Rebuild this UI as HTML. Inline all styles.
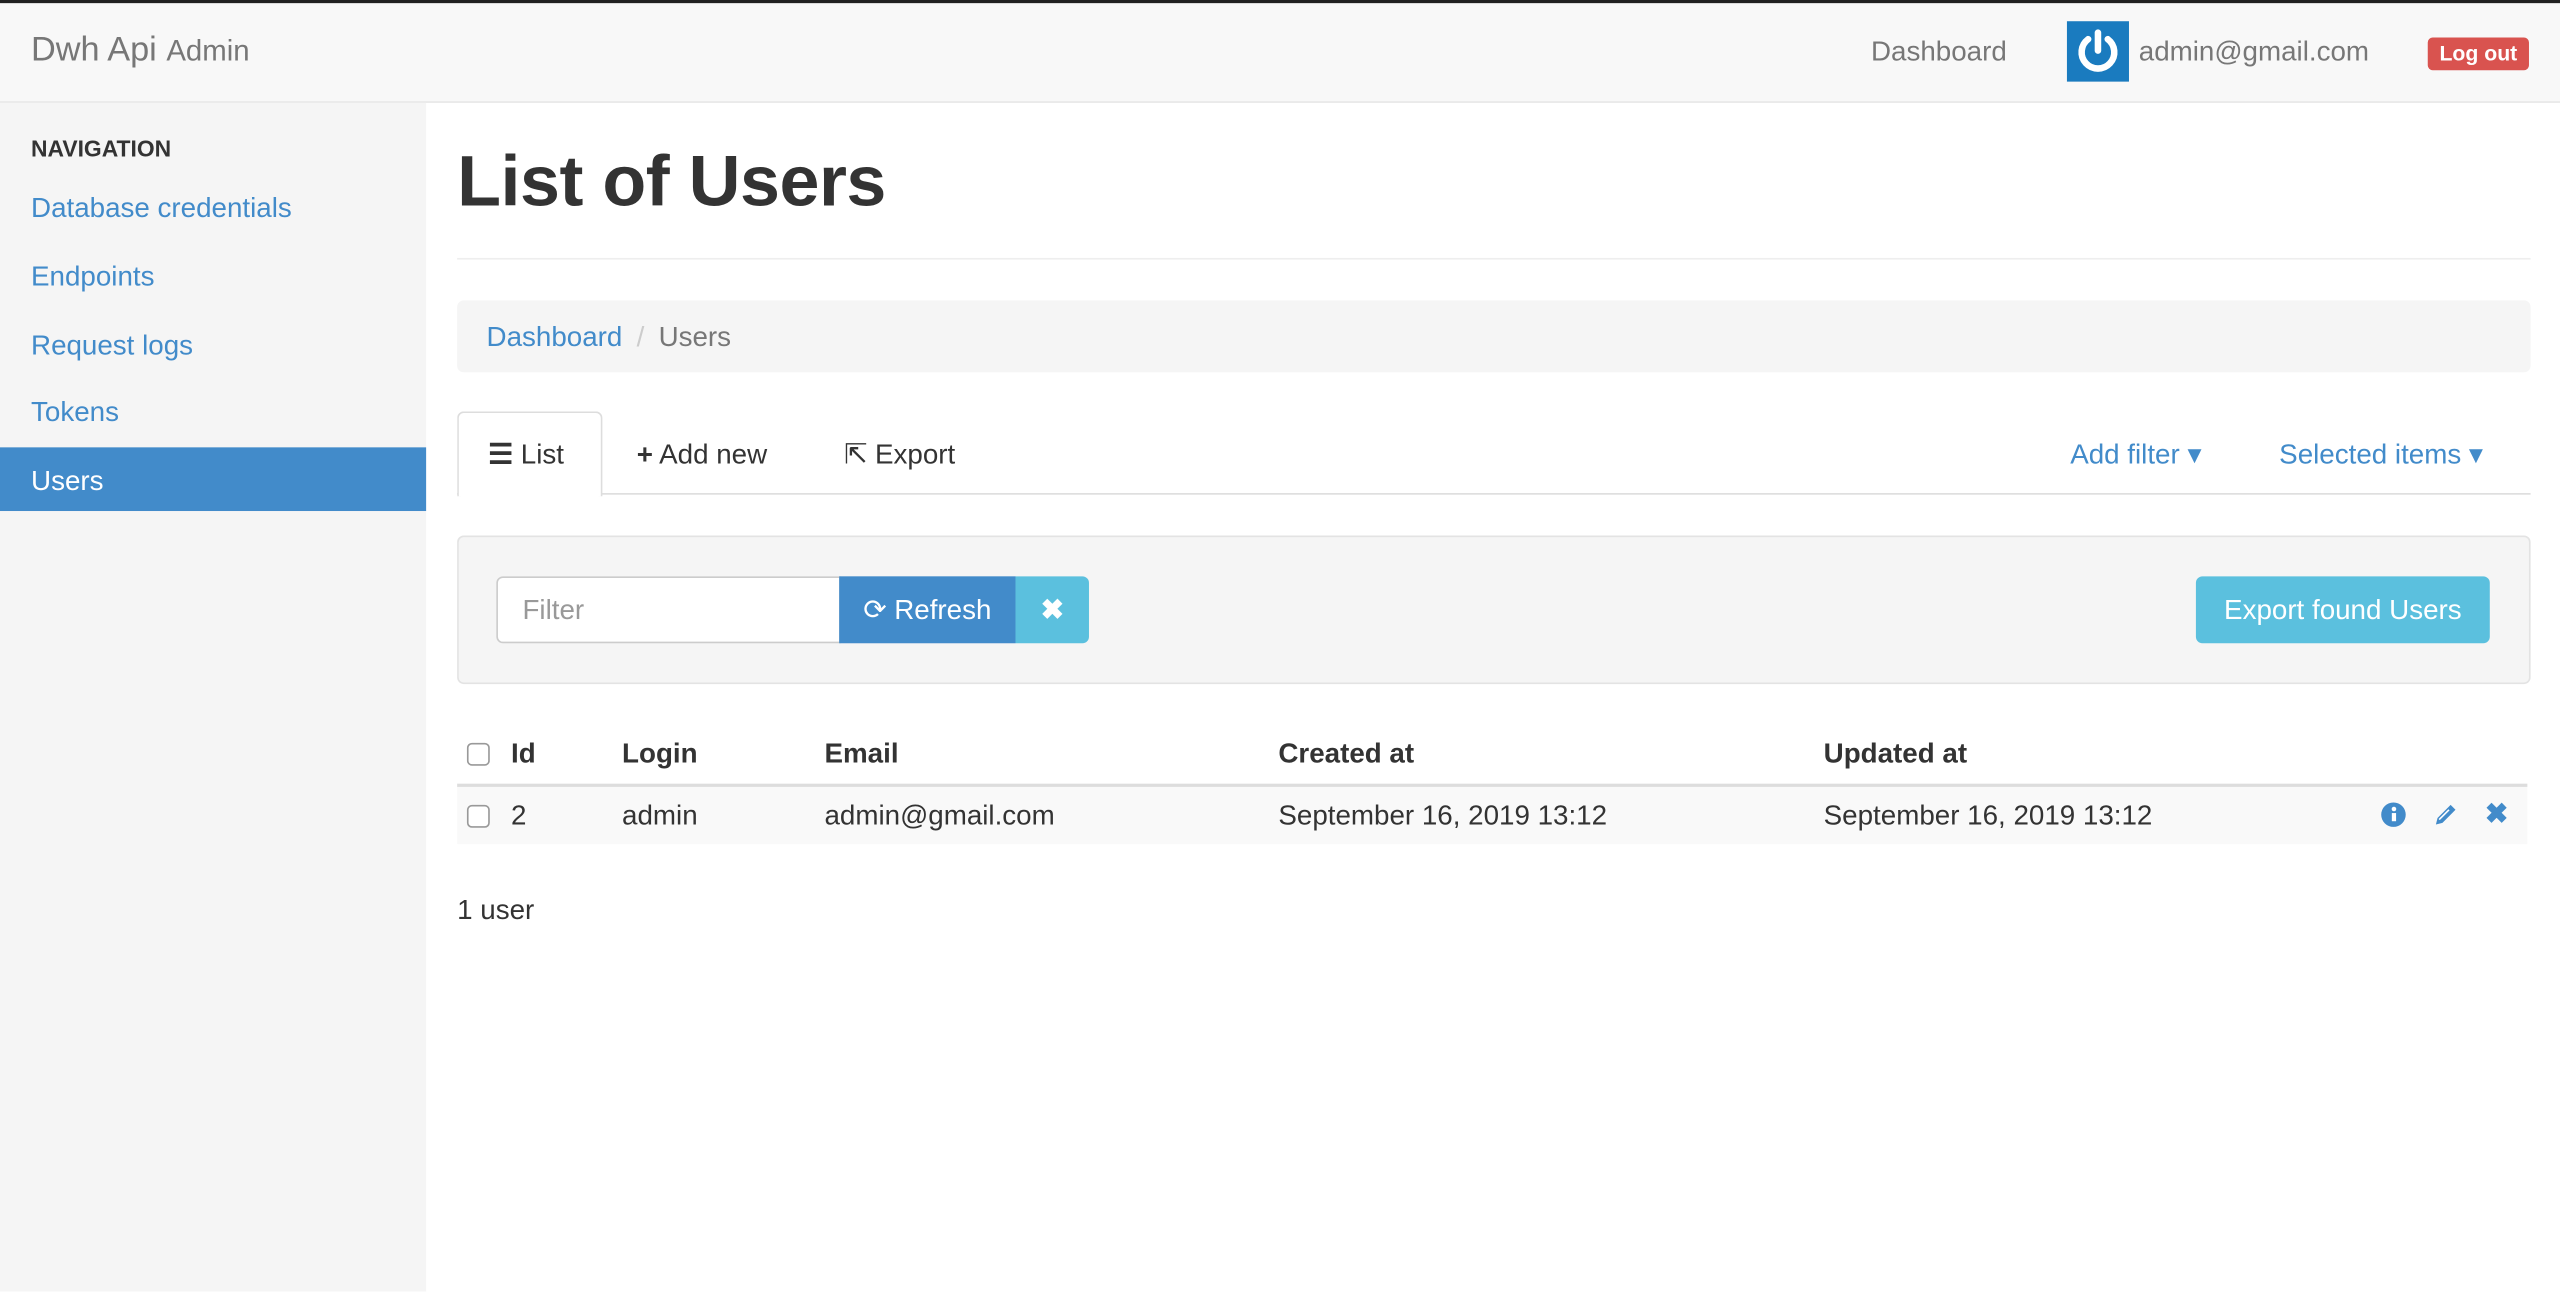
<!DOCTYPE html>
<html><head><meta charset="utf-8"><style>
html,body{margin:0;padding:0;width:2560px;height:1292px;overflow:hidden;background:#fff}
#w{position:absolute;left:0;top:0;width:1568px;height:791px;transform:scale(1.63265);transform-origin:0 0;font-family:"Liberation Sans",Arial,sans-serif;color:#333;font-size:17px}
.a{position:absolute;white-space:nowrap}
.l{color:#428bca}
</style></head><body><div id="w">
<div class="a" style="left:0;top:0;width:1568px;height:2px;background:#222"></div>
<div class="a" style="left:0;top:2px;width:1568px;height:60px;background:#f8f8f8;border-bottom:1px solid #e7e7e7"></div>
<div class="a" style="left:19px;top:19px;font-size:21px;color:#777">Dwh Api <span style="font-size:18px">Admin</span></div>
<div class="a" style="left:1146px;top:22px;color:#777">Dashboard</div>
<div class="a" style="left:1266px;top:13px;width:38px;height:37px;background:#1a7bbf"><svg width="38" height="37" viewBox="0 0 38 37"><path d="M13 11 A10 10 0 1 0 25 11" fill="none" stroke="#fff" stroke-width="4" stroke-linecap="round"/><path d="M19 7 V18" stroke="#fff" stroke-width="4" stroke-linecap="round"/></svg></div>
<div class="a" style="left:1310px;top:22px;color:#777">admin@gmail.com</div>
<div class="a" style="left:1487px;top:23px;width:62px;height:20px;background:#d9534f;border-radius:3px;color:#fff;font-weight:bold;font-size:13px;text-align:center;line-height:20px">Log out</div>
<div class="a" style="left:0;top:63px;width:261px;height:728px;background:#f5f5f5"></div>
<div class="a" style="left:19px;top:83px;font-size:14px;font-weight:bold;color:#333">NAVIGATION</div>
<div class="a l" style="left:19px;top:118px">Database credentials</div>
<div class="a l" style="left:19px;top:160px">Endpoints</div>
<div class="a l" style="left:19px;top:202px">Request logs</div>
<div class="a l" style="left:19px;top:243px">Tokens</div>
<div class="a" style="left:0;top:274px;width:261px;height:39px;background:#428bca"></div>
<div class="a" style="left:19px;top:285px;color:#fff">Users</div>
<div class="a" style="left:280px;top:87px;font-size:44px;font-weight:bold;letter-spacing:-0.3px">List of Users</div>
<div class="a" style="left:280px;top:158px;width:1270px;height:1px;background:#eee"></div>
<div class="a" style="left:280px;top:184px;width:1270px;height:44px;background:#f5f5f5;border-radius:4px"></div>
<div class="a" style="left:298px;top:197px"><span class="l">Dashboard</span> <span style="color:#ccc;padding:0 4px">/</span> <span style="color:#777">Users</span></div>
<div class="a" style="left:280px;top:302px;width:1270px;height:1px;background:#ddd"></div>
<div class="a" style="left:280px;top:252px;width:87px;height:51px;border:1px solid #ddd;border-bottom:none;border-radius:4px 4px 0 0;background:#fff"></div>
<div class="a" style="left:299px;top:269px"><b>☰</b> List</div>
<div class="a" style="left:390px;top:269px"><b>+</b> Add new</div>
<div class="a" style="left:517px;top:269px">⇱ Export</div>
<div class="a l" style="left:1268px;top:269px">Add filter ▾</div>
<div class="a l" style="left:1396px;top:269px">Selected items ▾</div>
<div class="a" style="left:280px;top:328px;width:1268px;height:89px;background:#f5f5f5;border:1px solid #e3e3e3;border-radius:4px"></div>
<div class="a" style="left:304px;top:353px;width:209px;height:39px;background:#fff;border:1px solid #ccc;border-radius:4px 0 0 4px"></div>
<div class="a" style="left:320px;top:364px;color:#999">Filter</div>
<div class="a" style="left:514px;top:353px;width:108px;height:41px;background:#428bca;color:#fff;line-height:41px;text-align:center">⟳ Refresh</div>
<div class="a" style="left:622px;top:353px;width:45px;height:41px;background:#5bc0de;color:#fff;line-height:41px;text-align:center;border-radius:0 4px 4px 0;font-weight:bold">✖</div>
<div class="a" style="left:1345px;top:353px;width:180px;height:41px;background:#5bc0de;color:#fff;line-height:41px;text-align:center;border-radius:4px">Export found Users</div>
<div class="a" style="left:286px;top:455px;width:12px;height:12px;border:1px solid #999;border-radius:3px;background:#fff"></div>
<div class="a" style="left:313px;top:452px;font-weight:bold">Id</div>
<div class="a" style="left:381px;top:452px;font-weight:bold">Login</div>
<div class="a" style="left:505px;top:452px;font-weight:bold">Email</div>
<div class="a" style="left:783px;top:452px;font-weight:bold">Created at</div>
<div class="a" style="left:1117px;top:452px;font-weight:bold">Updated at</div>
<div class="a" style="left:280px;top:480px;width:1268px;height:2px;background:#ddd"></div>
<div class="a" style="left:280px;top:482px;width:1268px;height:35px;background:#f9f9f9"></div>
<div class="a" style="left:286px;top:493px;width:12px;height:12px;border:1px solid #999;border-radius:3px;background:#fff"></div>
<div class="a" style="left:313px;top:490px">2</div>
<div class="a" style="left:381px;top:490px">admin</div>
<div class="a" style="left:505px;top:490px">admin@gmail.com</div>
<div class="a" style="left:783px;top:490px">September 16, 2019 13:12</div>
<div class="a" style="left:1117px;top:490px">September 16, 2019 13:12</div>
<svg class="a" style="left:1458px;top:491px" width="16" height="16" viewBox="0 0 16 16"><circle cx="8" cy="8" r="7.5" fill="#428bca"/><rect x="7" y="7" width="2.6" height="5" fill="#fff"/><circle cx="8.3" cy="4.5" r="1.4" fill="#fff"/></svg>
<svg class="a" style="left:1490px;top:491px" width="16" height="16" viewBox="0 0 16 16"><path d="M2 14 L3 10 L11 2 L14 5 L6 13 Z" fill="#428bca"/><path d="M4 11 L10 5" stroke="#fff" stroke-width="1"/></svg>
<div class="a" style="left:1522px;top:489px;color:#428bca;font-weight:bold;font-size:17px">✖</div>
<div class="a" style="left:280px;top:548px">1 user</div>
</div></body></html>
